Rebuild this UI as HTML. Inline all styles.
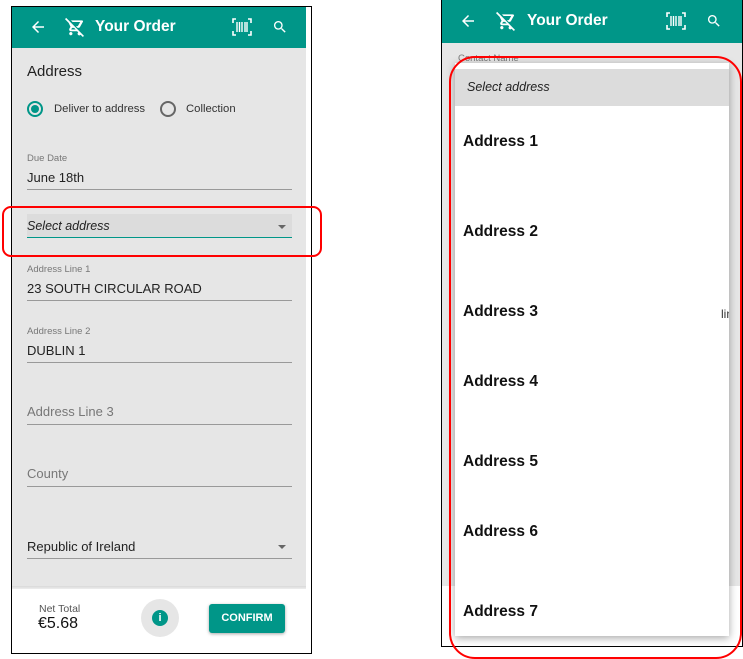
<!DOCTYPE html>
<html><head><style>
*{margin:0;padding:0;box-sizing:border-box}
body{width:743px;height:659px;background:#fff;position:relative;overflow:hidden;font-family:"Liberation Sans",sans-serif}
.a{position:absolute}
.hdr{background:#009688;color:#fff}
.t{font-weight:bold;font-size:15.5px;color:#fff}
.lbl{font-size:10px;color:#777}
.val{font-size:13px;color:#222}
.line{height:1px;background:#999}
.addr{font-weight:bold;font-size:15.5px;color:#111;left:463px}
</style></head><body>
<!-- LEFT -->
<div class="a" style="left:11px;top:6px;width:301px;height:648px;border:1px solid #000"></div>
<div class="a" style="left:12px;top:48px;width:294px;height:540px;background:#e6e6e6"></div>
<div class="a hdr" style="left:12px;top:7px;width:294px;height:41px"></div>
<svg class="a" style="left:29px;top:18px" width="18" height="18" viewBox="0 0 24 24"><path d="M20 11H7.8l5.6-5.6L12 4l-8 8 8 8 1.4-1.4L7.8 13H20z" fill="#fff"/></svg>
<svg class="a" style="left:65px;top:17px" width="20" height="20" viewBox="0 0 24 24"><path d="M1.4 1.1L0 2.5l4.4 4.6 2.2 4.6-1.4 2.4c-.1.3-.2.6-.2 1 0 1.1.9 2 2 2h7.5l1.4 1.4c-.5.4-.8.9-.8 1.6 0 1.1.9 2 2 2 .7 0 1.2-.3 1.6-.8l2.7 2.7 1.4-1.4zM7.4 15l1.1-2h2.4l2 2zM20 4H7.1l2 2h9.1l-2.8 5h-2.3l2 2h1.2c.7 0 1.4-.4 1.7-1l3.6-6.5C21.9 4.8 21.2 4 20 4zM7 18c-1.1 0-2 .9-2 2s.9 2 2 2 2-.9 2-2-.9-2-2-2z" fill="#fff"/></svg>
<div class="a t" style="left:95px;top:18px">Your Order</div>
<svg class="a" style="left:232px;top:18px" width="20" height="18" viewBox="0 0 20 18"><path d="M1 5V1h3M16 1h3v4M19 13v4h-3M4 17H1v-4" stroke="#fff" stroke-width="1.6" fill="none"/><path d="M5 4v10M7.5 4v10M10 4v10M13 4v10M15 4v10" stroke="#fff" stroke-width="1.4"/></svg>
<svg class="a" style="left:272px;top:19px" width="16" height="16" viewBox="0 0 24 24"><path d="M15.5 14h-.8l-.3-.3C15.4 12.6 16 11.1 16 9.5 16 5.9 13.1 3 9.5 3S3 5.9 3 9.5 5.9 16 9.5 16c1.6 0 3.1-.6 4.2-1.6l.3.3v.8l5 5 1.5-1.5zm-6 0C7 14 5 12 5 9.5S7 5 9.5 5 14 7 14 9.5 12 14 9.5 14z" fill="#fff"/></svg>
<div class="a" style="left:27px;top:63px;font-size:15px;color:#222">Address</div>
<div class="a" style="left:27px;top:101px;width:16px;height:16px;border:2px solid #009688;border-radius:50%"></div>
<div class="a" style="left:31px;top:105px;width:8px;height:8px;background:#009688;border-radius:50%"></div>
<div class="a" style="left:54px;top:103px;font-size:11.3px;color:#333">Deliver to address</div>
<div class="a" style="left:160px;top:101px;width:16px;height:16px;border:2px solid #666;border-radius:50%"></div>
<div class="a" style="left:186px;top:103px;font-size:11.3px;color:#333">Collection</div>
<div class="a lbl" style="left:27px;top:153px;font-size:9.5px">Due Date</div>
<div class="a val" style="left:27px;top:170px">June 18th</div>
<div class="a line" style="left:27px;top:189px;width:265px"></div>
<div class="a" style="left:27px;top:214px;width:265px;height:24px;background:#dcdcdc;border-bottom:1px solid #009688"></div>
<div class="a val" style="left:27px;top:219px;font-style:italic;font-size:12.5px">Select address</div>
<div class="a" style="left:278px;top:225px;border-left:4px solid transparent;border-right:4px solid transparent;border-top:4px solid #666"></div>
<div class="a" style="left:2px;top:206px;width:320px;height:51px;border:2.5px solid #f00;border-radius:9px"></div>
<div class="a lbl" style="left:27px;top:264px;font-size:9.5px">Address Line 1</div>
<div class="a val" style="left:27px;top:281px">23 SOUTH CIRCULAR ROAD</div>
<div class="a line" style="left:27px;top:300px;width:265px"></div>
<div class="a lbl" style="left:27px;top:326px;font-size:9.5px">Address Line 2</div>
<div class="a val" style="left:27px;top:343px">DUBLIN 1</div>
<div class="a line" style="left:27px;top:362px;width:265px"></div>
<div class="a" style="left:27px;top:404px;font-size:13px;color:#777">Address Line 3</div>
<div class="a line" style="left:27px;top:424px;width:265px"></div>
<div class="a" style="left:27px;top:466px;font-size:13px;color:#777">County</div>
<div class="a line" style="left:27px;top:486px;width:265px"></div>
<div class="a val" style="left:27px;top:539px">Republic of Ireland</div>
<div class="a" style="left:278px;top:545px;border-left:4px solid transparent;border-right:4px solid transparent;border-top:4px solid #666"></div>
<div class="a line" style="left:27px;top:558px;width:265px"></div>
<div class="a" style="left:12px;top:586px;width:294px;height:3px;background:linear-gradient(#d8d8d8,#eee)"></div>
<div class="a" style="left:39px;top:603px;font-size:10.5px;color:#555">Net Total</div>
<div class="a" style="left:38px;top:615px;font-size:16px;color:#111">€5.68</div>
<div class="a" style="left:141px;top:599px;width:38px;height:38px;border-radius:50%;background:#e6e6e6"></div>
<div class="a" style="left:152px;top:610px;width:16px;height:16px;border-radius:50%;background:#009688;color:#fff;font-size:11px;font-weight:bold;text-align:center;line-height:16px">i</div>
<div class="a" style="left:209px;top:604px;width:76px;height:29px;background:#009688;border-radius:3px;box-shadow:0 1px 3px rgba(0,0,0,.35);color:#fff;font-weight:bold;font-size:11px;text-align:center;line-height:29px">CONFIRM</div>
<!-- RIGHT -->
<div class="a" style="left:441px;top:-1px;width:302px;height:648px;border:1px solid #000"></div>
<div class="a" style="left:442px;top:43px;width:300px;height:545px;background:#e6e6e6"></div>
<div class="a hdr" style="left:442px;top:0;width:300px;height:43px"></div>
<svg class="a" style="left:459px;top:12px" width="18" height="18" viewBox="0 0 24 24"><path d="M20 11H7.8l5.6-5.6L12 4l-8 8 8 8 1.4-1.4L7.8 13H20z" fill="#fff"/></svg>
<svg class="a" style="left:496px;top:11px" width="20" height="20" viewBox="0 0 24 24"><path d="M1.4 1.1L0 2.5l4.4 4.6 2.2 4.6-1.4 2.4c-.1.3-.2.6-.2 1 0 1.1.9 2 2 2h7.5l1.4 1.4c-.5.4-.8.9-.8 1.6 0 1.1.9 2 2 2 .7 0 1.2-.3 1.6-.8l2.7 2.7 1.4-1.4zM7.4 15l1.1-2h2.4l2 2zM20 4H7.1l2 2h9.1l-2.8 5h-2.3l2 2h1.2c.7 0 1.4-.4 1.7-1l3.6-6.5C21.9 4.8 21.2 4 20 4zM7 18c-1.1 0-2 .9-2 2s.9 2 2 2 2-.9 2-2-.9-2-2-2z" fill="#fff"/></svg>
<div class="a t" style="left:527px;top:12px">Your Order</div>
<svg class="a" style="left:666px;top:12px" width="20" height="18" viewBox="0 0 20 18"><path d="M1 5V1h3M16 1h3v4M19 13v4h-3M4 17H1v-4" stroke="#fff" stroke-width="1.6" fill="none"/><path d="M5 4v10M7.5 4v10M10 4v10M13 4v10M15 4v10" stroke="#fff" stroke-width="1.4"/></svg>
<svg class="a" style="left:706px;top:13px" width="16" height="16" viewBox="0 0 24 24"><path d="M15.5 14h-.8l-.3-.3C15.4 12.6 16 11.1 16 9.5 16 5.9 13.1 3 9.5 3S3 5.9 3 9.5 5.9 16 9.5 16c1.6 0 3.1-.6 4.2-1.6l.3.3v.8l5 5 1.5-1.5zm-6 0C7 14 5 12 5 9.5S7 5 9.5 5 14 7 14 9.5 12 14 9.5 14z" fill="#fff"/></svg>
<div class="a lbl" style="left:458px;top:53px;font-size:9.5px">Contact Name</div>
<div class="a" style="left:442px;top:586px;width:300px;height:60px;background:#fff"></div>
<div class="a" style="left:455px;top:63px;width:274px;height:573px;background:#fff;box-shadow:0 2px 8px rgba(0,0,0,.35)"></div>
<div class="a" style="left:455px;top:69px;width:274px;height:37px;background:#dcdcdc"></div>
<div class="a" style="left:467px;top:80px;font-style:italic;font-size:12.5px;color:#222">Select address</div>
<div class="a addr" style="top:133px">Address 1</div>
<div class="a addr" style="top:223px">Address 2</div>
<div class="a addr" style="top:303px">Address 3</div>
<div class="a addr" style="top:373px">Address 4</div>
<div class="a addr" style="top:453px">Address 5</div>
<div class="a addr" style="top:523px">Address 6</div>
<div class="a addr" style="top:603px">Address 7</div>
<div class="a" style="left:721px;top:307px;font-size:12px;color:#333;width:8px;overflow:hidden">lin</div>
<div class="a" style="left:449px;top:56px;width:293px;height:603px;border:2.5px solid #f00;border-radius:26px"></div>
</body></html>
